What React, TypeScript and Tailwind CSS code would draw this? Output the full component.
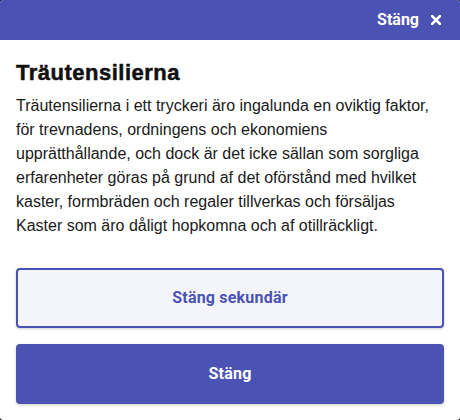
export default function App() {
  return (
    <div className="min-h-[420px] w-[460px] bg-black">
      <div className="flex h-[420px] flex-col overflow-hidden rounded-[3px] bg-white">
        <header className="flex h-10 shrink-0 items-center justify-end bg-[#4a52b4] pr-[19px]">
          <button
            type="button"
            className="flex items-center gap-3 font-[family-name:Roboto,sans-serif] text-base font-bold text-white"
          >
            Stäng
            <svg width="10" height="10" viewBox="0 0 10 10" aria-hidden>
              <path d="M1 1L9 9M9 1L1 9" stroke="currentColor" strokeWidth="2.6" strokeLinecap="square" />
            </svg>
          </button>
        </header>

        <main className="flex flex-1 flex-col px-4 pt-[19px]">
          <h1 className="font-[family-name:'Liberation_Sans',Arial,sans-serif] text-[22px] leading-7 font-bold tracking-[0.5px] text-[#111] [-webkit-text-stroke:0.5px_#111]">
            Träutensilierna
          </h1>
          <p className="mt-[7px] font-[family-name:'Liberation_Sans',Arial,sans-serif] text-base leading-6 text-[#1a1a1a]">
            Träutensilierna i ett tryckeri äro ingalunda en oviktig faktor, för trevnadens, ordningens och
            ekonomiens upprätthållande, och dock är det icke sällan som sorgliga erfarenheter göras på grund af
            det oförstånd med hvilket kaster, formbräden och regaler tillverkas och försäljas Kaster som äro
            dåligt hopkomna och af otillräckligt.
          </p>

          <div className="mt-[30px] flex flex-col gap-4 font-[family-name:Roboto,sans-serif] text-base font-bold">
            <button
              type="button"
              className="h-[60px] w-full rounded-[4px] border-2 border-[#4a52b4] bg-[#f4f5fa] tracking-[0.2px] text-[#4a52b4] shadow-[0_1px_3px_rgba(0,0,0,0.2)]"
            >
              Stäng sekundär
            </button>
            <button
              type="button"
              className="h-[60px] w-full rounded-[4px] bg-[#4a52b4] tracking-[0.2px] text-white shadow-[0_1px_3px_rgba(0,0,0,0.2)]"
            >
              Stäng
            </button>
          </div>
        </main>
      </div>
    </div>
  );
}
